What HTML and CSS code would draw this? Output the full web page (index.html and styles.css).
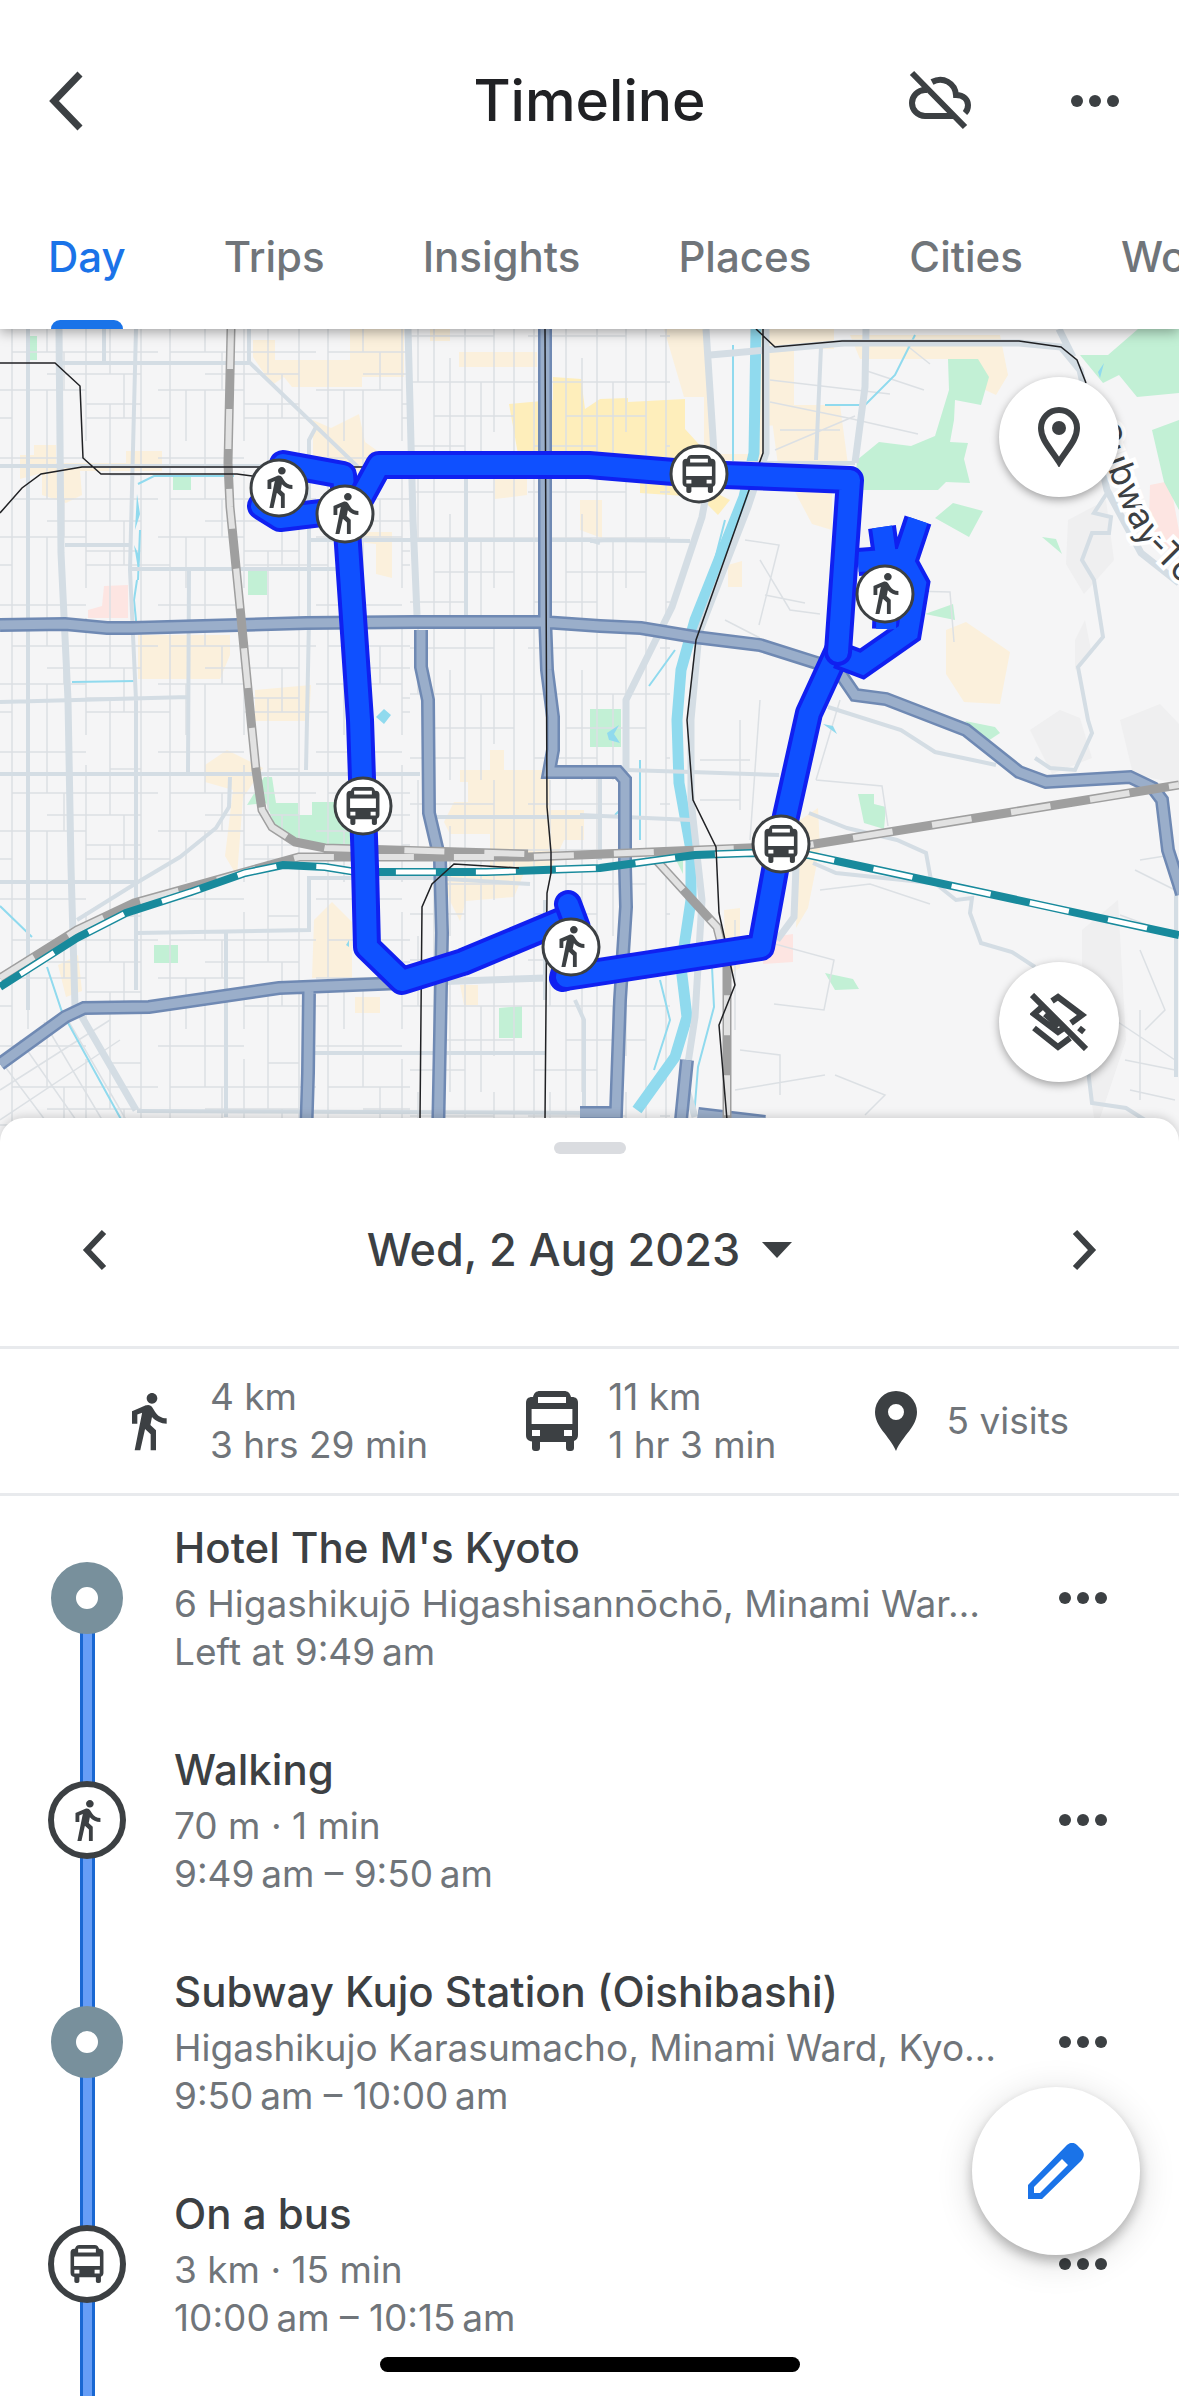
FILE: index.html
```html
<!DOCTYPE html>
<html lang="en">
<head>
    <meta charset="UTF-8">
    <meta name="viewport" content="width=device-width, initial-scale=1.0">
    <title>Timeline</title>
    <link rel="stylesheet" href="styles.css">
</head>
<body>
    <!-- shared icons -->
    <svg class="sprite" width="0" height="0" aria-hidden="true">
        <symbol id="walk" viewBox="0 0 24 24">
            <path d="M13.5 5.5c1.1 0 2-.9 2-2s-.9-2-2-2-2 .9-2 2 .9 2 2 2zM9.8 8.9L7 23h2.1l1.8-8 2.1 2v6h2v-7.5l-2.1-2 .6-3C14.8 12 16.8 13 19 13v-2c-1.9 0-3.5-1-4.3-2.4l-1-1.6c-.4-.6-1-1-1.7-1-.3 0-.5.1-.8.1L6 8.3V13h2V9.6l1.8-.7"/>
        </symbol>
        <symbol id="bus" viewBox="0 0 26 30">
            <path fill-rule="evenodd" d="M7 0h12c2 0 3 1 3.500 3H23c2 0 3 1 3 3v16c0 1.500-.6 2.500-2 3v3.500c0 1-.6 1.500-1.500 1.500h-1c-.9 0-1.500-.5-1.500-1.500V25.500H7V28.500c0 1-.6 1.500-1.500 1.500h-1C3.600 30 3 29.500 3 28.500V25.200C1 25 0 24 0 22V6c0-2 1-3 3-3h.5C4 1 5 0 7 0zM6 3v3h14V3zM2.800 9v7.500h20.400V9zM3 19.500v3h4v-3zM19 19.500v3h4v-3z"/>
        </symbol>
        <symbol id="dots" viewBox="0 0 48 12">
            <circle cx="6" cy="6" r="6"/><circle cx="24" cy="6" r="6"/><circle cx="42" cy="6" r="6"/>
        </symbol>
    </svg>

    <header class="header">
        <div class="title-bar">
            <button class="icon-btn back" aria-label="Back">
                <svg width="36" height="60" viewBox="0 0 36 60"><path class="line thick" d="M32 3L6 30l26 27"/></svg>
            </button>
            <h1>Timeline</h1>
            <div class="actions">
                <button class="icon-btn" aria-label="Backup is off">
                    <svg width="62" height="62" viewBox="0 0 62 62">
                        <path class="line" d="M3 3l53 54M18 20h-2a13 13 0 0 0 0 26h30M23 12c11-6 23 1 24 13 8 0 12 5 12 10 0 4-1 6-3 8"/>
                    </svg>
                </button>
                <button class="icon-btn" aria-label="More">
                    <svg width="48" height="12"><use href="#dots"/></svg>
                </button>
            </div>
        </div>
        <nav class="tabs">
            <a class="tab active" href="#day">Day</a>
            <a class="tab" href="#trips">Trips</a>
            <a class="tab" href="#insights">Insights</a>
            <a class="tab" href="#places">Places</a>
            <a class="tab" href="#cities">Cities</a>
            <a class="tab" href="#world">World</a>
        </nav>
    </header>

    <section class="map">
        <svg class="map-canvas" viewBox="0 329 1179 811" preserveAspectRatio="xMidYMin slice">
            <defs>
                <pattern id="blocks" width="158" height="147" patternUnits="userSpaceOnUse">
                    <path class="street" d="M12 0V147M47 0V58M47 96V147M86 30V147M110 0V80M110 110V147M141 0V147M0 17H86M12 58H158M47 80H141M0 96H86M0 124H12M86 124H158M110 34H141M64 58V96M28 96V147M124 80V124M86 110H141"/>
                </pattern>
                <pattern id="lanes" width="132" height="156" patternUnits="userSpaceOnUse">
                    <path class="street" d="M6 0V156M22 0V70M38 0V156M54 46V156M69 0V156M85 70V156M98 0V120M118 0V156M0 24H98M0 70H132M38 104H118M6 134H69"/>
                </pattern>
                <path id="walk-west" d="M283 464L343 475 346 510 280 518 261 506 280 487"/>
                <path id="bus-west" d="M345 500L348 545 360 720 365 867 367 947 402 981 463 962 566 919"/>
                <path id="walk-south" d="M568 904L577 928 571 950 563 978"/>
                <path id="bus-south" d="M566 977L761 947 780 843 809 713 838 650"/>
                <path id="walk-east" d="M838 655L862 664 908 632 916 584 904 562 918 520M908 566L885 605M882 527L888 570 886 629M858 562L912 558M872 572H908"/>
                <path id="bus-north" d="M357 505L379 465H589L698 474 850 480 838 652"/>
                <path id="main-roads" d="M0 625L65 624 107 628H132L306 623 413 622H543L600 626 641 628 695 637 760 645 817 663 840 673 855 695 886 699 966 730 1019 772 1046 782 1130 777 1153 788 1162 800 1168 850 1182 894M545 329V617L547 670 553 717V750L549 772H618L625 780V867L626 907 620 1000 616 1113H580M421 630V667L428 700 429 813 440 860 442 933 438 1140M0 1064L65 1017 84 1008 149 1007 279 988 402 983M309 990L308 1073 306 1140M687 1060L681 1120M698 1114L765 1122"/>
                <path id="railway" d="M231 329L228 463 230 507 239 597 251 720 256 770 262 810 272 827 295 842 325 848 528 854M0 978L77 930 134 903 299 857H528L580 855 748 848 809 845 1179 785M656 860L717 927 727 967V1140"/>
                <path id="shinkansen" d="M0 987L77 938 126 913 191 892 245 873 283 865 325 867 356 872H486L600 868 695 855 752 853 809 855 1179 935"/>
            </defs>

            <rect class="land" y="329" width="1179" height="811"/>
            <g class="hill">
                <path d="M1068 520l38-20 8 60-30 34-18-30zM1030 730l30-20 20 8 12 40-40 16zM1082 930l36-30 8 140-30 90-14-90zM1120 720l40-16 19 20v60l-46-10zM1075 640l10-20 6 30-16 20z"/>
            </g>

            <!-- built-up and shopping areas -->
            <g class="shops">
                <path d="M253 340h22v20h75v-31h54v48h-42v10h-70l-8-10-12 8-19-28zM459 352h78v15h-78zM430 329h20v12h-20z"/>
                <path d="M20 455h14v-10h22v18h70v-12h36v20H80l2 24-16 8-24-8v-22l-22 6zM313 420l18 8 28-14 6 28 14 10-6 24-60-20zM358 532h34v46l-16-4v-30l-18-2zM138 635h92v20l-10 24H138zM255 690l56-5-2 36h-54zM495 465l32 10v20l-32 4z"/>
                <path d="M664 329h42l6 125h42V329h80v20h-40v75l-30 2v34h-60V397h-20zM770 405h70l8 60h-70zM850 335h150l8 40-12 20-30-14-10-22H860zM794 490h38v40l-20-6z"/>
                <path d="M205 765l22-15 36 18-20 30-6 78-12-20 8-66-28-8zM460 770h30v-20h14v20h46v40h34v30h-20l-14 30h-60v-36h-40l-6-12 10-20h14v-20h-8zM440 875l30-6 54 4-10 24-48 4-6 20-10-20zM314 920l18-18 20 20v56h-40zM355 997h25v16h-25zM460 985h18v20h-14zM58 965l20-10 4 36-16 6z"/>
                <path d="M946 630l20-8 44 30-10 52-36-2-18-28zM724 910l16-2v60l-14 8zM800 820l18-12 2 40-12 60-12 20zM580 500h22v38l-22-8zM728 565l14-4v26h-14z"/>
            </g>
            <g class="centre">
                <path d="M509 404l44-4v-23l28 2 4 30 15-10 28-1v4l57-3v30l20 22-10 14v22l-58-8h-72l-44-8zM560 410l12 2-4 16zM640 480l60 5 30 15-12 15-18-18-60-4z"/>
            </g>
            <g class="hospital">
                <path d="M88 610l14-4 2-20 24-1v33H88zM1150 485l20-4 9 50v22l-18-6-12-28zM765 938l28-4v28l-30 2z"/>
            </g>
            <g class="park">
                <path d="M29 336h8v24h-8zM173 477h18v13h-18zM248 571h19v24h-19zM154 945h24v18h-24zM499 1008l23-2v32h-23zM590 709h31v38h-31zM247 805l17-28h8l4 26h22v12h14v-13h54v43h-50l-22-6-20-16-8-20z"/>
                <path d="M948 359h30l11 18-8 28-26-5-1 20-4 22 18 1-4 16 6 24-24-1-8 8H855l2-30 22-18 32 4 24-10 14-46zM935 518l18-15 30 8-14 26zM1042 537l14 2 6 15zM925 614l28-10 2 16zM965 721l30 6 5 6-12 8zM858 794h16v10l12 3-2 22-20-6zM825 973l28 6 6 10-24 1zM675 850l8 10v14l-8-16z"/>
                <path d="M1080 355h28l30-26h41v64l-42 4-18-22-16 8zM1152 430l27-10v90l-15-28z"/>
            </g>

            <rect fill="url(#blocks)" y="329" width="410" height="811"/>
            <rect fill="url(#lanes)" x="410" y="329" width="260" height="811"/>
            <path class="street" d="M770 380l120 14M770 402l78 16 70 16M775 450l80-34M864 370l60 20M780 430h60M745 540l34 5-20 80M765 595l40 8M725 620l35 18M760 560l30 50 30 4M870 590l80 2 4 50M816 780l66 6 6 40M840 700l-24 80M740 720v90M760 700l-10 140M700 760h50M735 920v110M735 1090l90-15M740 1050l40 5v40M835 1075l50 20-20 20M760 940l74 20-10 50-50-6M820 890l50-6 60 20M700 800h40M1135 870l40 20M1120 915l55 20M1140 950l25 60-20 20M1115 1020l60 40M1125 1060l50 10M1130 1090l45 10M1140 1010v90M1140 860l25-4M900 340l30 24"/>
            <path class="street" d="M0 1060l60 80M20 1040l70 100M44 1022l70 118M62 1010l70 120M0 1090l110-70M0 1120l120-80"/>

            <!-- water -->
            <path class="river" d="M756 329L754 453 744 497 695 620 681 670 677 720 679 783 691 850V900L681 967 687 1017 675 1057 637 1110"/>
            <path class="stream" d="M733 345v120M725 520l-28 110M675 650l-26 36M712 967l2 40-16 60-4 50M640 760v80M138 580l2-50M137 580l-3 20 3 30M138 484l16-8h80M47 967l15 45 66 120M915 335l-20 40-30 30h-40M660 980l10 40-16 50M615 815l10-10M72 682l64-1M0 906l32 31"/>
            <path class="pond" d="M376 717l8-8 7 6-7 9zM607 733l12-8-5 9 6 9-11-3zM823 724l10 2 4 8zM1098 372l6-9-4 15zM346 945l3-5v7zM137 494l3 20-5 16zM134 545l6 12-2 12z"/>

            <!-- secondary roads -->
            <path class="road" d="M28 329V1010M104 329V363M249 329V362L358 467M316 427L309 440V620L306 770M189 570L188 772M466 477V617M59 363H249M0 466H270M65 545H130M130 569H350M310 540H590L600 543M0 702L189 697M0 774H420M435 817H600M0 882H137M137 933L309 930V878H420M230 777L229 807 216 828 180 857 138 882 77 920M310 878H430L530 884M226 933V1117M313 1053H545M137 1111L600 1113M136 329L130 570 136 700V990M821 347L816 460M580 815L691 820M626 770L691 772 779 775M545 1000V900M575 1000L584 1020V1117M600 775V860M715 463H855M590 541L608 540 690 541"/>
            <path class="road wide" d="M59 329L61 553 68 700 71 867 75 1007 82 1017 136 1110M408 329L413 520 417 615M706 329L714 453 702 517 672 607 626 700V770M866 329L865 387 855 463M710 355L844 343H1019L1061 347 1080 370 1107 490 1141 553 1179 583M1059 329L1073 357M766 329V453L748 507 699 633 691 720V800L702 900 695 1017 685 1083 695 1117M796 867L794 917 777 940M402 983L545 978"/>
            <path class="road" d="M1107 493L1094 513 1111 517 1109 533 1092 533 1082 560 1094 580 1103 637 1078 667 1088 720 1092 733 1075 770 1050 768 1035 758M828 707L901 730 935 752 996 765M809 813L847 828 897 840 926 853 931 880 956 900 972 898 970 913 981 943 1012 952 1035 967M813 863L836 873 931 883M1176 870V1077M1088 1070L1092 1103 1126 1108 1145 1120"/>

            <!-- main roads -->
            <use class="main-edge" href="#main-roads"/>
            <use class="main-fill" href="#main-roads"/>

            <!-- railways -->
            <use class="rail-edge" href="#railway"/>
            <use class="rail-dash" href="#railway"/>
            <use class="shinkansen-edge" href="#shinkansen"/>
            <use class="shinkansen-dash" href="#shinkansen"/>
            <path class="subway" d="M0 363H55L80 386 83 458 101 474H237L260 477M0 513L22 488 41 474 82 467H364M545 329L547 807 551 852V873L547 893 545 1120M519 868L454 864 432 884 422 907 420 1120M756 329L775 347 842 341H1019L1061 347 1077 360 1086 383M763 329V453L748 493 696 640 687 720 693 800 716 847 719 913 735 985 719 1025 727 1120"/>

            <path id="line-name" fill="none" d="M1093 428L1124 511 1142 544 1210 612"/>
            <text class="map-label"><textPath href="#line-name">Subway-Tozai</textPath></text>

            <!-- travelled route -->
            <g class="route">
                <use class="route-edge" href="#walk-west"/><use class="route-fill" href="#walk-west"/>
                <use class="route-edge" href="#bus-west"/><use class="route-fill" href="#bus-west"/>
                <use class="route-edge" href="#walk-south"/><use class="route-fill" href="#walk-south"/>
                <use class="route-edge" href="#bus-south"/><use class="route-fill" href="#bus-south"/>
                <g class="flat">
                    <use class="route-edge" href="#walk-east"/><use class="route-fill" href="#walk-east"/>
                </g>
                <use class="route-edge" href="#bus-north"/><use class="route-fill" href="#bus-north"/>
            </g>

            <g class="marker"><circle cx="279" cy="488" r="28"/><use href="#walk" x="256" y="464" width="46" height="46"/></g>
            <g class="marker"><circle cx="345" cy="514" r="28"/><use href="#walk" x="322" y="490" width="46" height="46"/></g>
            <g class="marker"><circle cx="571" cy="947" r="28"/><use href="#walk" x="548" y="923" width="46" height="46"/></g>
            <g class="marker"><circle cx="885" cy="594" r="28"/><use href="#walk" x="862" y="570" width="46" height="46"/></g>
            <g class="marker"><circle cx="699" cy="474" r="28"/><use href="#bus" x="682" y="455" width="34" height="38"/></g>
            <g class="marker"><circle cx="363" cy="806" r="28"/><use href="#bus" x="346" y="787" width="34" height="38"/></g>
            <g class="marker"><circle cx="781" cy="844" r="28"/><use href="#bus" x="764" y="825" width="34" height="38"/></g>
        </svg>

        <button class="map-btn map-btn-top" aria-label="Show places">
            <svg width="42" height="60" viewBox="0 0 42 60">
                <path class="line" d="M21 55C13 42 3 33 3 21a18 18 0 0 1 36 0c0 12-10 21-18 34z"/>
                <circle cx="21" cy="21" r="7"/>
            </svg>
        </button>
        <button class="map-btn map-btn-bottom" aria-label="Hide layers">
            <svg width="58" height="58" viewBox="0 0 58 58">
                <path class="line" d="M2 2l54 54M22 8l6-4 24 18-11 8M13 13L4 21l24 18 6-4M15 21l14 12M4 35l24 19 12-9M49 35l5 4"/>
            </svg>
        </button>
    </section>

    <main class="sheet">
        <div class="handle"></div>
        <div class="date-bar">
            <button class="icon-btn" aria-label="Previous day">
                <svg width="26" height="42" viewBox="0 0 26 42"><path class="line" d="M22 3L5 21l17 18"/></svg>
            </button>
            <button class="date-btn">
                Wed, 2 Aug 2023
                <svg width="30" height="16" viewBox="0 0 30 16"><path d="M0 0h30L15 16z"/></svg>
            </button>
            <button class="icon-btn" aria-label="Next day">
                <svg width="26" height="42" viewBox="0 0 26 42"><path class="line" d="M4 3l17 18L4 39"/></svg>
            </button>
        </div>

        <div class="stats">
            <div class="stat">
                <svg width="64" height="64"><use href="#walk"/></svg>
                <p>4 km<br>3 hrs 29 min</p>
            </div>
            <div class="stat">
                <svg width="52" height="60"><use href="#bus"/></svg>
                <p>11 km<br>1 hr 3 min</p>
            </div>
            <div class="stat">
                <svg width="42" height="60" viewBox="0 0 42 60">
                    <path fill-rule="evenodd" d="M21 60C14 44 0 36 0 21a21 21 0 0 1 42 0c0 15-14 23-21 39zM21 13a8 8 0 1 0 0 16 8 8 0 0 0 0-16z"/>
                </svg>
                <p>5 visits</p>
            </div>
        </div>

        <ul class="timeline">
            <li class="entry">
                <div class="rail-col"><span class="stop"></span></div>
                <div class="info">
                    <h2>Hotel The M's Kyoto</h2>
                    <p>6 Higashikujō Higashisannōchō, Minami War…</p>
                    <p>Left at 9:49&#8239;am</p>
                </div>
                <button class="icon-btn" aria-label="More"><svg width="48" height="12"><use href="#dots"/></svg></button>
            </li>
            <li class="entry">
                <div class="rail-col"><span class="ride"><svg width="46" height="46"><use href="#walk"/></svg></span></div>
                <div class="info">
                    <h2>Walking</h2>
                    <p>70 m · 1 min</p>
                    <p>9:49&#8239;am – 9:50&#8239;am</p>
                </div>
                <button class="icon-btn" aria-label="More"><svg width="48" height="12"><use href="#dots"/></svg></button>
            </li>
            <li class="entry">
                <div class="rail-col"><span class="stop"></span></div>
                <div class="info">
                    <h2>Subway Kujo Station (Oishibashi)</h2>
                    <p>Higashikujo Karasumacho, Minami Ward, Kyo…</p>
                    <p>9:50&#8239;am – 10:00&#8239;am</p>
                </div>
                <button class="icon-btn" aria-label="More"><svg width="48" height="12"><use href="#dots"/></svg></button>
            </li>
            <li class="entry">
                <div class="rail-col"><span class="ride"><svg width="34" height="38"><use href="#bus"/></svg></span></div>
                <div class="info">
                    <h2>On a bus</h2>
                    <p>3 km · 15 min</p>
                    <p>10:00&#8239;am – 10:15&#8239;am</p>
                </div>
                <button class="icon-btn" aria-label="More"><svg width="48" height="12"><use href="#dots"/></svg></button>
            </li>
        </ul>
    </main>

    <button class="fab" aria-label="Edit">
        <svg width="56" height="56" viewBox="0 0 56 56">
            <path fill-rule="evenodd" d="M0 42L38 3c4-4 8-4 11-1l5 5c3 4 2 7-1 11L14 56H0zM6 44v6h6l28-28-6-6z"/>
        </svg>
    </button>
    <div class="home-bar"></div>
</body>
</html>
```
FILE: styles.css
```css
* {
    box-sizing: border-box;
}

body {
    margin: 0;
    min-height: 100vh;
    display: flex;
    flex-direction: column;
    background: #fff;
    color: #3c4043;
    font-family: Inter, Roboto, sans-serif;
    font-size: 37px;
    line-height: 48px;
}

h1, h2, p, ul {
    margin: 0;
    padding: 0;
    font-weight: 500;
}

p {
    font-weight: 400;
    color: #70757a;
    white-space: nowrap;
}

button {
    border: none;
    background: none;
    padding: 0;
    color: inherit;
    font-family: inherit;
    cursor: pointer;
}

svg {
    display: block;
    fill: #3c4043;
}

.sprite {
    position: absolute;
}

.line {
    fill: none;
    stroke: #3c4043;
    stroke-width: 6;
}

.thick {
    stroke-width: 7;
}

/* header */
.header {
    position: relative;
    z-index: 2;
    background: #fff;
    box-shadow: 0 3px 12px rgba(0, 0, 0, 0.35);
}

.title-bar {
    display: grid;
    grid-template-columns: 1fr auto 1fr;
    align-items: center;
    height: 202px;
    padding: 0 48px;
}

.back {
    justify-self: start;
}

h1 {
    font-size: 57px;
    line-height: 72px;
    color: #202124;
}

.actions {
    display: flex;
    justify-content: flex-end;
    align-items: center;
    gap: 100px;
    padding-right: 12px;
}

.tabs {
    display: flex;
    gap: 98px;
    height: 127px;
    padding: 30px 0 0 48px;
    overflow: hidden;
}

.tab {
    position: relative;
    color: #70757a;
    font-size: 42px;
    font-weight: 500;
    line-height: 50px;
    text-decoration: none;
}

.tab.active {
    color: #1a73e8;
}

.tab.active::after {
    content: "";
    position: absolute;
    left: 3px;
    right: 3px;
    bottom: 0;
    height: 9px;
    border-radius: 9px 9px 0 0;
    background: #1a73e8;
}

/* map */
.map {
    position: relative;
    aspect-ratio: 1179 / 811;
}

.map-canvas {
    width: 100%;
    height: 100%;
}

.land { fill: #f5f5f6; }
.hill { fill: #efeff0; }
.shops { fill: #fbf0dc; }
.centre { fill: #feeebb; }
.hospital { fill: #fde5e2; }
.park { fill: #c2f0d5; }
.pond { fill: #90daee; }

.map-canvas use,
.street, .road, .river, .stream, .subway {
    fill: none;
}

.street {
    stroke: #dce0e4;
    stroke-width: 1.5;
}

.river {
    stroke: #90daee;
    stroke-width: 11;
}

.stream {
    stroke: #90daee;
    stroke-width: 2;
}

.road {
    stroke: #d4dde4;
    stroke-width: 4;
}

.road.wide {
    stroke-width: 7;
}

.main-edge {
    stroke: #6f89b3;
    stroke-width: 14;
}

.main-fill {
    stroke: #9aaeca;
    stroke-width: 9;
}

.rail-edge {
    stroke: #9f9f9f;
    stroke-width: 9;
}

.rail-dash {
    stroke: #e2e2e2;
    stroke-width: 6;
    stroke-dasharray: 40;
}

.shinkansen-edge {
    stroke: #188a9c;
    stroke-width: 8;
}

.shinkansen-dash {
    stroke: #fff;
    stroke-width: 5;
    stroke-dasharray: 40;
    stroke-dashoffset: 56;
}

.subway {
    stroke: #202124;
    stroke-width: 1.5;
}

.map-label {
    font-size: 35px;
    fill: #3c4043;
    stroke: #fff;
    stroke-width: 8;
    paint-order: stroke;
}

.route {
    stroke-linecap: round;
    stroke-linejoin: round;
}

.flat {
    stroke-linecap: butt;
    stroke-linejoin: miter;
}

.route-edge {
    stroke: #1020f0;
    stroke-width: 28;
}

.route-fill {
    stroke: #0f50ff;
    stroke-width: 20;
}

.marker circle {
    fill: #fff;
    stroke: #3c4043;
    stroke-width: 3;
}

.marker use {
    fill: #3c4043;
}

.map-btn {
    position: absolute;
    right: 60px;
    display: flex;
    justify-content: center;
    align-items: center;
    width: 120px;
    height: 120px;
    border-radius: 50%;
    background: #fff;
    box-shadow: 0 3px 9px rgba(0, 0, 0, 0.35);
}

.map-btn-top {
    top: 48px;
}

.map-btn-bottom {
    bottom: 58px;
}

/* bottom sheet */
.sheet {
    position: relative;
    z-index: 1;
    flex: 1;
    margin-top: -22px;
    padding-top: 24px;
    border-radius: 24px 24px 0 0;
    background: #fff;
    box-shadow: 0 -2px 10px rgba(0, 0, 0, 0.15);
    overflow: hidden;
}

.handle {
    width: 72px;
    height: 12px;
    margin: 0 auto;
    border-radius: 6px;
    background: #dadce0;
}

.date-bar {
    display: flex;
    justify-content: space-between;
    align-items: center;
    height: 192px;
    padding: 0 82px;
}

.date-btn {
    display: flex;
    align-items: center;
    gap: 22px;
    margin-right: 20px;
    font-size: 45px;
    font-weight: 500;
    line-height: 60px;
}

.stats {
    display: flex;
    justify-content: space-between;
    align-items: center;
    height: 150px;
    padding: 0 110px 0 116px;
    border-top: 3px solid #e8eaed;
    border-bottom: 3px solid #e8eaed;
}

.stat {
    display: flex;
    align-items: center;
    gap: 30px;
}

.timeline {
    margin-top: -9px;
    list-style: none;
}

.entry {
    display: flex;
    align-items: center;
    padding-right: 72px;
}

.rail-col {
    position: relative;
    display: flex;
    justify-content: center;
    align-items: center;
    align-self: stretch;
    width: 174px;
}

.rail-col::before {
    content: "";
    position: absolute;
    top: 0;
    bottom: 0;
    left: 80px;
    width: 9px;
    border: solid #1967d2;
    border-width: 0 3px;
    background: #669df6;
}

.entry:first-child .rail-col::before {
    top: 50%;
}

.entry:last-child .rail-col::before {
    bottom: -60px;
}

.stop, .ride {
    position: relative;
    border-radius: 50%;
    background: #fff;
}

.stop {
    width: 72px;
    height: 72px;
    border: 25px solid #78909c;
}

.ride {
    display: flex;
    justify-content: center;
    align-items: center;
    width: 78px;
    height: 78px;
    border: 6px solid #3c4043;
}

.info {
    flex: 1;
    padding: 33px 0;
}

h2 {
    margin-bottom: 4px;
    font-size: 42px;
    line-height: 56px;
}

/* floating parts */
.fab {
    position: fixed;
    z-index: 3;
    right: 39px;
    bottom: 141px;
    display: flex;
    justify-content: center;
    align-items: center;
    width: 168px;
    height: 168px;
    border-radius: 50%;
    background: #fff;
    box-shadow: 0 6px 12px rgba(0, 0, 0, 0.25), 0 6px 36px rgba(0, 0, 0, 0.15);
}

.fab svg {
    fill: #1a73e8;
}

.home-bar {
    position: fixed;
    z-index: 4;
    left: 50%;
    bottom: 24px;
    width: 420px;
    height: 15px;
    margin-left: -210px;
    border-radius: 8px;
    background: #000;
}
```
